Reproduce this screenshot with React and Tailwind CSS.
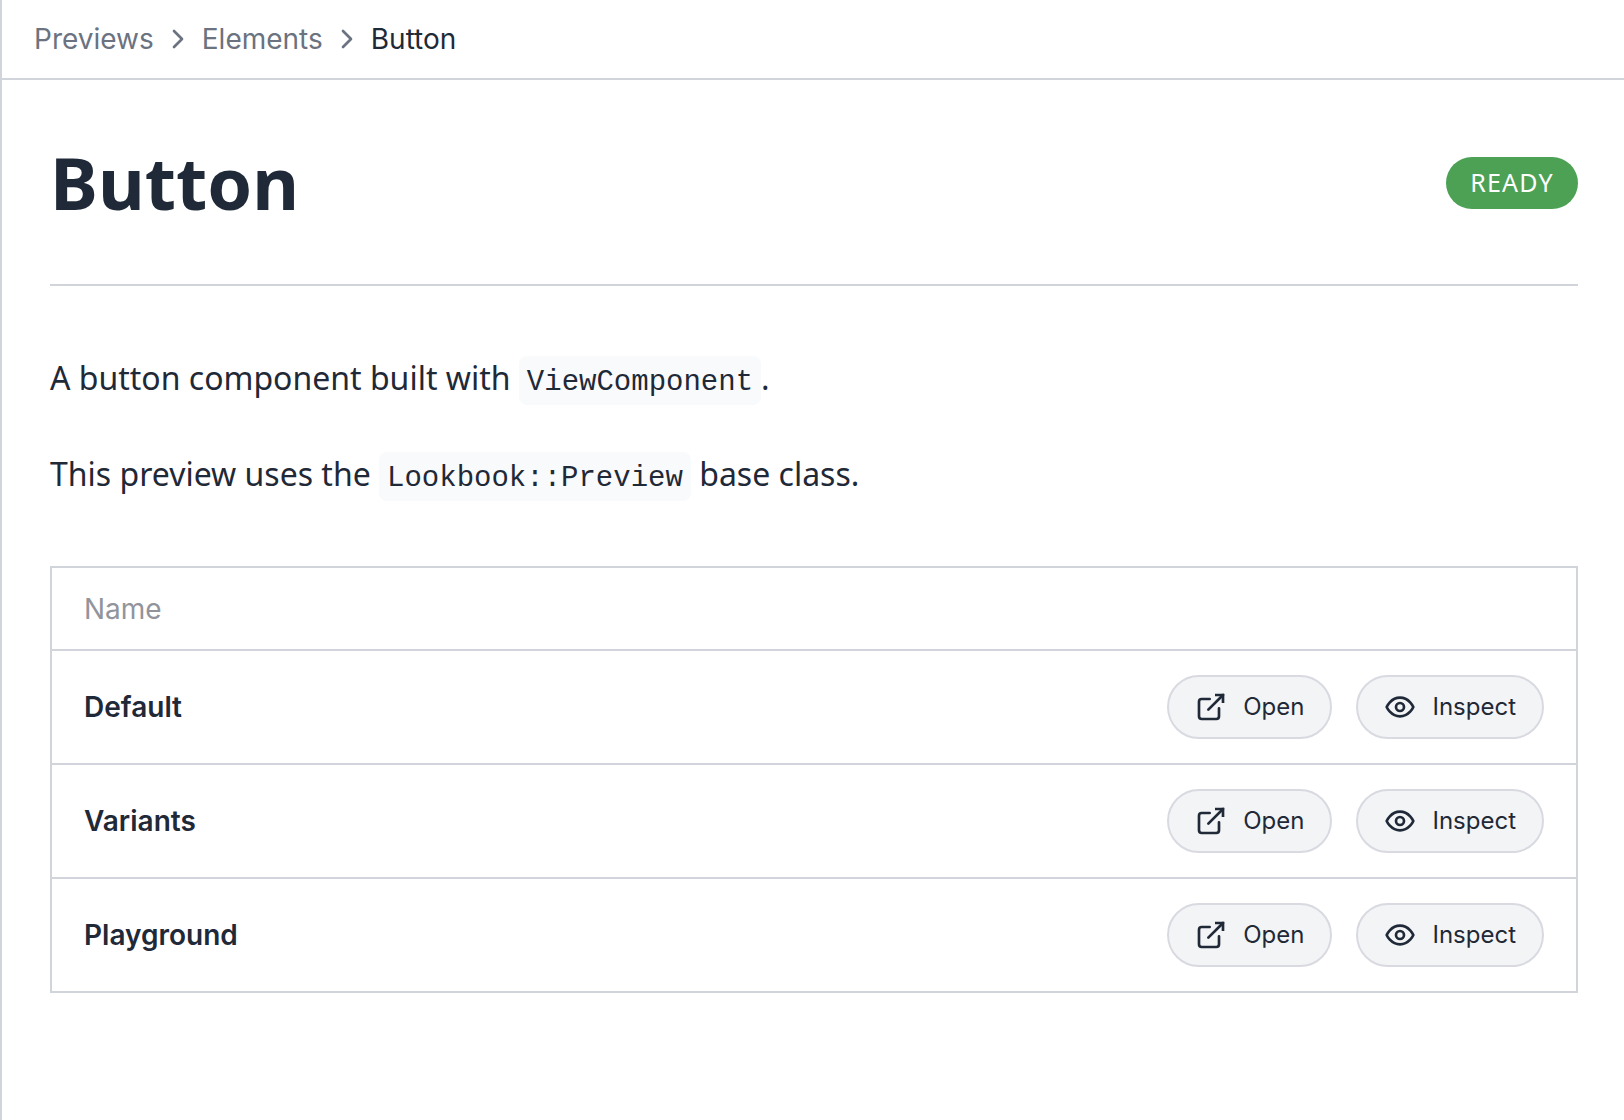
import React from "react";

const crumbs = ["Previews", "Elements"];
const scenarios = ["Default", "Variants", "Playground"];

function Icon({ className, children }) {
  return (
    <svg
      className={className}
      viewBox="0 0 24 24"
      fill="none"
      stroke="currentColor"
      strokeWidth={2}
      strokeLinecap="round"
      strokeLinejoin="round"
      aria-hidden="true"
    >
      {children}
    </svg>
  );
}

function ActionLink({ label, children }) {
  return (
    <a
      href="#"
      className="flex h-16 items-center gap-4 rounded-full border-2 border-[#d9dae1] bg-[#f3f4f6] px-[26px] text-2xl text-[#1f2937]"
    >
      <Icon className="size-8 shrink-0">{children}</Icon>
      <span>{label}</span>
    </a>
  );
}

function Code({ children }) {
  return (
    <code className="rounded-lg bg-[#f9fafb] px-2 pt-2.5 pb-1.5 font-['Liberation_Mono',monospace] text-[29px] leading-none">
      {children}
    </code>
  );
}

export default function App() {
  return (
    <div className="min-h-screen border-l-2 border-[#d1d5db] bg-white font-[Inter,sans-serif] text-[#1f2937]">
      <nav aria-label="Breadcrumb" className="border-b-2 border-[#d1d5db] px-8 py-[19px]">
        <ol className="flex items-center gap-2 text-[28px] leading-10">
          {crumbs.map((c) => (
            <li key={c} className="flex items-center gap-2 text-[#6b7280]">
              <a href="#">{c}</a>
              <Icon className="size-8">
                <path d="m9 18 6-6-6-6" />
              </Icon>
            </li>
          ))}
          <li aria-current="page">Button</li>
        </ol>
      </nav>

      <main className="pt-12 pr-[46px] pl-12 font-['Noto_Sans',sans-serif]">
        <header className="flex items-start justify-between border-b-2 border-[#d1d5db] pb-[62px]">
          <h1 className="pt-3.5 text-[72px] leading-20 font-bold">Button</h1>
          <span className="mt-[29px] flex h-[52px] items-center rounded-full bg-[#4ca154] px-6 text-[25px] tracking-wider text-white">
            READY
          </span>
        </header>

        <div className="space-y-10 pt-16 text-[32px] leading-14">
          <p>
            A button component built with <Code>ViewComponent</Code>.
          </p>
          <p>
            This preview uses the <Code>Lookbook::Preview</Code> base class.
          </p>
        </div>

        <table className="mt-16 w-full border-collapse border-2 border-[#d1d5db] font-[Inter,sans-serif] text-[28px] leading-10">
          <thead>
            <tr>
              <th scope="col" colSpan={2} className="h-[83px] px-8 text-left font-normal text-[#92949c]">
                Name
              </th>
            </tr>
          </thead>
          <tbody>
            {scenarios.map((name) => (
              <tr key={name} className="border-t-2 border-[#d1d5db]">
                <th scope="row" className="h-[114px] px-8 text-left font-semibold">
                  {name}
                </th>
                <td className="px-8">
                  <div className="flex justify-end gap-6">
                    <ActionLink label="Open">
                      <path d="M18 13v6a2 2 0 0 1-2 2H5a2 2 0 0 1-2-2V8a2 2 0 0 1 2-2h6" />
                      <path d="M15 3h6v6" strokeLinecap="butt" strokeLinejoin="miter" />
                      <path d="M10 14 21 3" />
                    </ActionLink>
                    <ActionLink label="Inspect">
                      <path d="M2 12s3-7 10-7 10 7 10 7-3 7-10 7-10-7-10-7Z" />
                      <circle cx="12" cy="12" r="3" />
                    </ActionLink>
                  </div>
                </td>
              </tr>
            ))}
          </tbody>
        </table>
      </main>
    </div>
  );
}
